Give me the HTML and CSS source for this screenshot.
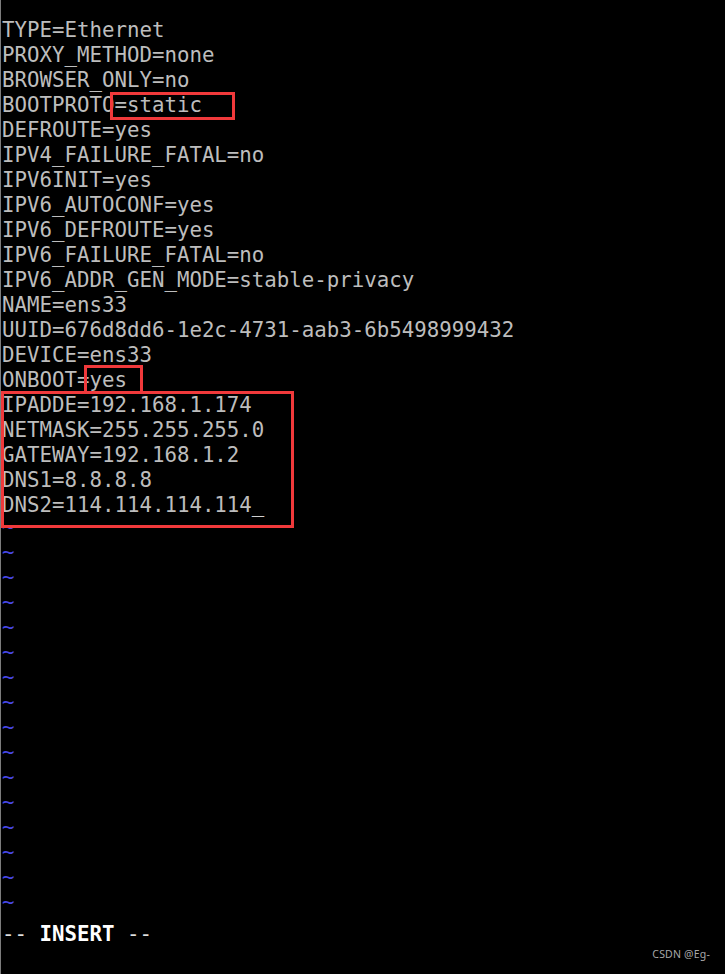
FILE: index.html
```html
<!DOCTYPE html>
<html lang="en">
<head>
<meta charset="utf-8">
<title>ifcfg-ens33 - vi</title>
<link rel="stylesheet" href="styles.css">
</head>
<body>
<div class="screen">
<pre class="buffer"><span class="ln">TYPE=Ethernet</span>
<span class="ln">PROXY_METHOD=none</span>
<span class="ln">BROWSER_ONLY=no</span>
<span class="ln">BOOTPROTO=static</span>
<span class="ln">DEFROUTE=yes</span>
<span class="ln">IPV4_FAILURE_FATAL=no</span>
<span class="ln">IPV6INIT=yes</span>
<span class="ln">IPV6_AUTOCONF=yes</span>
<span class="ln">IPV6_DEFROUTE=yes</span>
<span class="ln">IPV6_FAILURE_FATAL=no</span>
<span class="ln">IPV6_ADDR_GEN_MODE=stable-privacy</span>
<span class="ln">NAME=ens33</span>
<span class="ln">UUID=676d8dd6-1e2c-4731-aab3-6b5498999432</span>
<span class="ln">DEVICE=ens33</span>
<span class="ln">ONBOOT=yes</span>
<span class="ln">IPADDE=192.168.1.174</span>
<span class="ln">NETMASK=255.255.255.0</span>
<span class="ln">GATEWAY=192.168.1.2</span>
<span class="ln">DNS1=8.8.8.8</span>
<span class="ln">DNS2=114.114.114.114<span class="cursor">_</span></span>
<span class="tilde">~</span>
<span class="tilde">~</span>
<span class="tilde">~</span>
<span class="tilde">~</span>
<span class="tilde">~</span>
<span class="tilde">~</span>
<span class="tilde">~</span>
<span class="tilde">~</span>
<span class="tilde">~</span>
<span class="tilde">~</span>
<span class="tilde">~</span>
<span class="tilde">~</span>
<span class="tilde">~</span>
<span class="tilde">~</span>
<span class="tilde">~</span>
<span class="tilde">~</span></pre>
<div class="status">-- <span class="mode">INSERT</span> --</div>
<span class="mark mark-bootproto"></span>
<span class="mark mark-onboot"></span>
<span class="mark mark-network"></span>
<div class="watermark">CSDN @Eg-</div>
</div>
</body>
</html>
```
FILE: styles.css
```css
html, body {
  margin: 0;
  padding: 0;
  background: #000;
}

.screen {
  position: relative;
  width: 724px;
  height: 974px;
  background: #000;
  border-left: 1px solid #7c7c7c;
  overflow: hidden;
  font-family: "DejaVu Sans Mono", "Liberation Mono", monospace;
}

.buffer {
  margin: 0;
  padding: 18px 0 0 1px;
  font-family: inherit;
  font-size: 20.76px;
  line-height: 25px;
  color: #bdbdbd;
  white-space: pre;
}

.cursor {
  color: #d0d0d0;
}

.tilde {
  color: #4848e6;
  vertical-align: 3px;
  line-height: 0;
}

.status {
  margin-top: 4px;
  padding-left: 1px;
  font-size: 20.76px;
  line-height: 25px;
  color: #e0e0e0;
  white-space: pre;
}

.mode {
  font-weight: bold;
  color: #ffffff;
}

.mark {
  position: absolute;
  box-sizing: border-box;
  border: 3px solid #f0393b;
}

.mark-bootproto {
  left: 109px;
  top: 92px;
  width: 125px;
  height: 28px;
}

.mark-onboot {
  left: 83px;
  top: 365px;
  width: 59px;
  height: 29px;
}

.mark-network {
  left: 0;
  top: 391px;
  width: 293px;
  height: 137px;
}

.watermark {
  position: absolute;
  right: 15px;
  bottom: 13px;
  font-family: "Noto Sans", "DejaVu Sans", sans-serif;
  font-size: 10.5px;
  color: #a8a8a8;
  letter-spacing: 0.2px;
}
```
